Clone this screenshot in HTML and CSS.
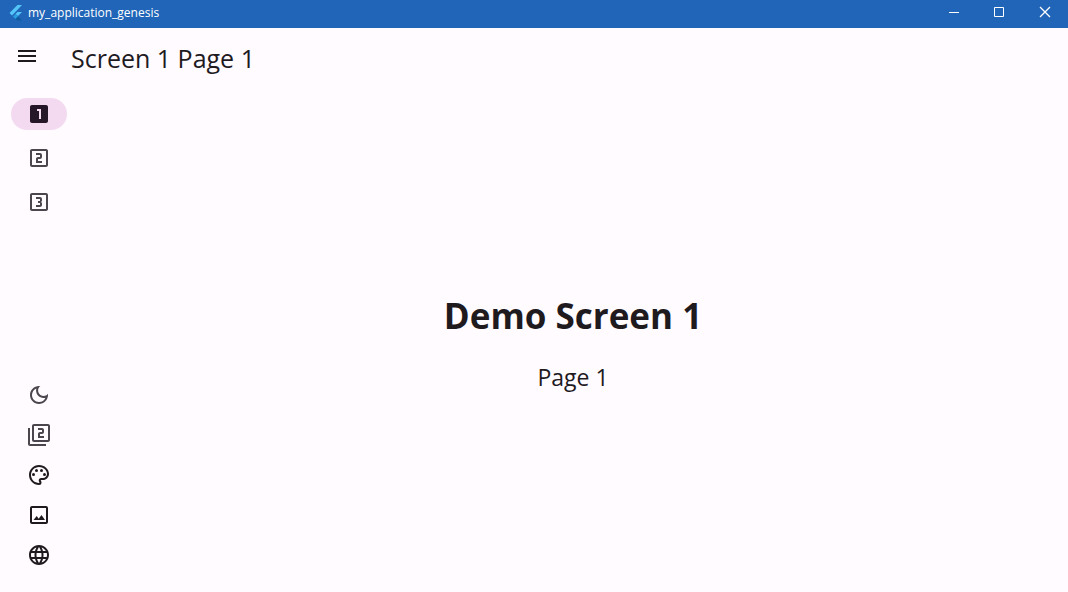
FILE: index.html
```html
<!DOCTYPE html>
<html lang="en">
<head>
<meta charset="utf-8">
<title>my_application_genesis</title>
<link rel="stylesheet" href="styles.css">
</head>
<body>
<header class="titlebar">
  <svg class="logo" viewBox="0 0 16 16" aria-hidden="true"><path fill="#54c5f8" d="M9.500 0H14L4 10.500 1.500 8z"/><path fill="#54c5f8" d="M9.500 7H14L10 11 7.500 9z"/><path fill="#29a0e0" d="M5 11.500 7.500 9 10 11.500 7.500 14z"/><path fill="#0f5c9e" d="M7.500 14 10 11.500 14 15.500H9.500z"/></svg>
  <span class="app-name">my_application_genesis</span>
  <div class="window-controls">
    <button class="window-button" aria-label="Minimize"><svg viewBox="0 0 10 10"><path d="M1 5.500H11"/></svg></button>
    <button class="window-button" aria-label="Maximize"><svg viewBox="0 0 10 10"><path d="M.5.500h9v9h-9z"/></svg></button>
    <button class="window-button" aria-label="Close"><svg viewBox="0 0 10 10"><path stroke-width="1.300" d="M0 0 10 10M10 0 0 10"/></svg></button>
  </div>
</header>
<div class="appbar">
  <button class="icon-button menu" aria-label="Menu"><svg class="icon" viewBox="0 0 24 24"><path d="M3 18h18v-2H3v2zm0-5h18v-2H3v2zm0-7v2h18V6H3z"/></svg></button>
  <h1 class="page-title">Screen 1 Page 1</h1>
</div>
<div class="workspace">
  <aside class="rail">
    <nav class="destinations" aria-label="Screens">
      <button class="destination selected" aria-label="Screen 1" aria-current="page"><svg class="icon" viewBox="0 0 24 24"><path d="M19 3H5c-1.100 0-2 .9-2 2v14c0 1.100.9 2 2 2h14c1.100 0 2-.9 2-2V5c0-1.100-.9-2-2-2zm-5 14h-2V9h-2V7h4v10z"/></svg></button>
      <button class="destination" aria-label="Screen 2"><svg class="icon" viewBox="0 0 24 24"><path d="M19 3H5c-1.100 0-2 .9-2 2v14c0 1.100.9 2 2 2h14c1.100 0 2-.9 2-2V5c0-1.100-.9-2-2-2zm0 16H5V5h14v14zm-4-4h-4v-2h2c1.100 0 2-.89 2-2V9c0-1.110-.9-2-2-2H9v2h4v2h-2c-1.100 0-2 .89-2 2v4h6v-2z"/></svg></button>
      <button class="destination" aria-label="Screen 3"><svg class="icon" viewBox="0 0 24 24"><path d="M19 3H5c-1.100 0-2 .9-2 2v14c0 1.100.9 2 2 2h14c1.100 0 2-.9 2-2V5c0-1.100-.9-2-2-2zm0 16H5V5h14v14zM15 15v-1.500c0-.83-.67-1.500-1.500-1.500.83 0 1.500-.67 1.500-1.500V9c0-1.110-.9-2-2-2H9v2h4v2h-2v2h2v2H9v2h4c1.100 0 2-.89 2-2z"/></svg></button>
    </nav>
    <div class="tools">
      <button class="icon-button muted" aria-label="Dark mode"><svg class="icon" viewBox="0 0 24 24"><path d="M9.370 5.510C9.190 6.150 9.100 6.820 9.100 7.500c0 4.080 3.320 7.400 7.400 7.400.68 0 1.350-.09 1.990-.27C17.450 17.190 14.930 19 12 19c-3.860 0-7-3.140-7-7 0-2.930 1.810-5.450 4.370-6.490zM12 3c-4.970 0-9 4.030-9 9s4.030 9 9 9 9-4.030 9-9c0-.46-.04-.92-.1-1.360-.98 1.370-2.580 2.260-4.400 2.260-2.980 0-5.400-2.420-5.400-5.400 0-1.810.89-3.420 2.260-4.400C12.920 3.040 12.460 3 12 3z"/></svg></button>
      <button class="icon-button muted" aria-label="Material version 2"><svg class="icon" viewBox="0 0 24 24"><path d="M3 5H1v16c0 1.100.9 2 2 2h16v-2H3V5zm18-4H7c-1.100 0-2 .9-2 2v14c0 1.100.9 2 2 2h14c1.100 0 2-.9 2-2V3c0-1.100-.9-2-2-2zm0 16H7V3h14v14zm-4-4h-4v-2h2c1.100 0 2-.89 2-2V7c0-1.110-.9-2-2-2h-4v2h4v2h-2c-1.100 0-2 .89-2 2v4h6v-2z"/></svg></button>
      <button class="icon-button" aria-label="Theme colour"><svg class="icon" viewBox="0 0 24 24"><path d="M12 22C6.490 22 2 17.510 2 12S6.490 2 12 2s10 4.040 10 9c0 3.310-2.690 6-6 6h-1.770c-.28 0-.5.220-.5.500 0 .12.050.230.130.330.410.470.640 1.060.640 1.670A2.500 2.500 0 0 1 12 22zm0-18c-4.410 0-8 3.590-8 8s3.590 8 8 8c.28 0 .5-.22.500-.5a.54.54 0 0 0-.14-.35c-.41-.46-.63-1.050-.63-1.650a2.500 2.500 0 0 1 2.500-2.500H16c2.210 0 4-1.790 4-4 0-3.860-3.590-7-8-7z"/><circle cx="6.500" cy="11.500" r="1.500"/><circle cx="9.500" cy="7.500" r="1.500"/><circle cx="14.500" cy="7.500" r="1.500"/><circle cx="17.500" cy="11.500" r="1.500"/></svg></button>
      <button class="icon-button" aria-label="Image"><svg class="icon" viewBox="0 0 24 24"><path d="M19 5v14H5V5h14m0-2H5c-1.100 0-2 .9-2 2v14c0 1.100.9 2 2 2h14c1.100 0 2-.9 2-2V5c0-1.100-.9-2-2-2z"/><path d="M14.500 12 11.700 15.700 9.700 13 6.500 17H18z"/></svg></button>
      <button class="icon-button" aria-label="Language"><svg class="icon" viewBox="0 0 24 24"><path d="M11.990 2C6.470 2 2 6.480 2 12s4.470 10 9.990 10C17.520 22 22 17.520 22 12S17.520 2 11.990 2zm6.930 6h-2.950c-.32-1.250-.78-2.450-1.380-3.560 1.840.63 3.370 1.910 4.330 3.560zM12 4.040c.83 1.200 1.480 2.530 1.910 3.960h-3.820c.43-1.430 1.080-2.760 1.910-3.960zM4.260 14C4.100 13.360 4 12.690 4 12s.1-1.360.26-2h3.380c-.08.66-.14 1.320-.14 2s.06 1.340.14 2H4.260zm.82 2h2.950c.32 1.250.78 2.450 1.380 3.560-1.840-.63-3.370-1.900-4.330-3.560zm2.950-8H5.080c.96-1.660 2.490-2.930 4.330-3.560C8.810 5.550 8.350 6.750 8.030 8zM12 19.960c-.83-1.200-1.480-2.530-1.910-3.960h3.820c-.43 1.430-1.080 2.760-1.910 3.960zM14.340 14H9.660c-.09-.66-.16-1.320-.16-2s.07-1.350.16-2h4.680c.09.65.16 1.320.16 2s-.07 1.340-.16 2zm.25 5.560c.6-1.110 1.060-2.310 1.380-3.560h2.950c-.96 1.650-2.490 2.930-4.330 3.560zM16.360 14c.08-.66.14-1.320.14-2s-.06-1.340-.14-2h3.380c.16.64.26 1.310.26 2s-.1 1.360-.26 2h-3.380z"/></svg></button>
    </div>
  </aside>
  <main class="content">
    <h2 class="heading">Demo Screen 1</h2>
    <p class="subheading">Page 1</p>
  </main>
</div>
</body>
</html>
```
FILE: styles.css
```css
* { box-sizing: border-box; }

body {
  margin: 0;
  min-height: 100vh;
  display: flex;
  flex-direction: column;
  background: #fffbff;
  color: #1e1a1e;
  font-family: "Segoe UI", "Open Sans", "Noto Sans", sans-serif;
}

button {
  display: grid;
  place-items: center;
  padding: 0;
  border: 0;
  background: none;
  color: inherit;
}

h1, h2, p { margin: 0; font-weight: 400; }

.titlebar {
  display: flex;
  align-items: center;
  height: 28px;
  padding: 0 0 2px 8px;
  background: #2065b8;
  color: #fff;
}

.logo { width: 16px; height: 16px; }

.app-name {
  margin-left: 4px;
  font-size: 12px;
  line-height: 16px;
}

.window-controls {
  display: flex;
  align-self: flex-start;
  margin-left: auto;
}

.window-button { width: 46px; height: 24px; }

.window-button svg {
  width: 10px;
  height: 10px;
  overflow: visible;
  fill: none;
  stroke: #fff;
}

.appbar {
  display: flex;
  align-items: center;
  height: 56px;
  padding-left: 7px;
}

.icon { width: 24px; height: 24px; fill: currentColor; }

.icon-button { width: 40px; height: 40px; }

.page-title {
  margin: 4px 0 0 24px;
  font-size: 25px;
  line-height: 32px;
}

.workspace { display: flex; flex: 1; }

.rail {
  display: flex;
  flex-direction: column;
  justify-content: space-between;
  align-items: center;
  width: 78px;
  padding: 14px 0 17px;
}

.destinations {
  display: flex;
  flex-direction: column;
  gap: 12px;
}

.destination {
  width: 56px;
  height: 32px;
  border-radius: 16px;
  color: #4b454d;
}

.selected { background: #f3daf0; color: #251728; }

.muted { color: #4b454d; }

.content {
  display: flex;
  flex: 1;
  flex-direction: column;
  align-items: center;
  justify-content: center;
  gap: 21px;
  padding-top: 8px;
}

.heading {
  font-size: 35px;
  line-height: 48px;
  font-weight: 700;
}

.subheading { font-size: 23px; line-height: 32px; }
```
